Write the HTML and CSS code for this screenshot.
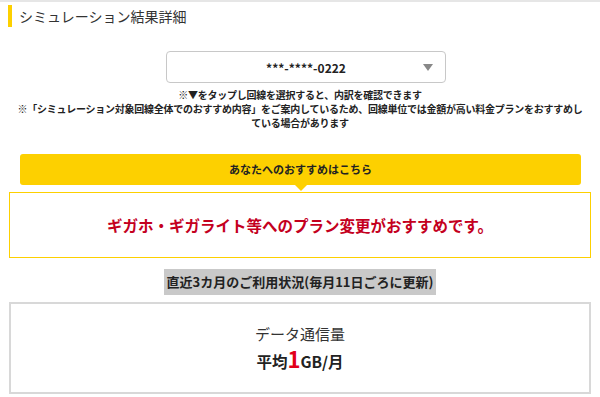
FILE: index.html
```html
<!DOCTYPE html>
<html lang="ja">
<head>
  <meta charset="UTF-8">
  <meta name="viewport" content="width=device-width, initial-scale=1.0">
  <title>シミュレーション結果詳細</title>
  <link rel="stylesheet" href="styles.css">
</head>
<body>
  <header class="page-title">
    <h1>シミュレーション結果詳細</h1>
  </header>

  <main class="content">
    <div class="line-select">
      <span></span>
      <span class="line-number">***-****-0222</span>
      <span class="arrow"></span>
    </div>

    <p class="notes">
      ※▼をタップし回線を選択すると、内訳を確認できます<br>
      ※「シミュレーション対象回線全体でのおすすめ内容」をご案内しているため、回線単位では金額が高い料金プランをおすすめし<br>
      ている場合があります
    </p>

    <section class="recommend">
      <div class="recommend-head">あなたへのおすすめはこちら</div>
      <div class="recommend-body">ギガホ・ギガライト等へのプラン変更がおすすめです。</div>
    </section>

    <div class="usage-label-wrap">
      <span class="usage-label">直近3カ月のご利用状況(毎月11日ごろに更新)</span>
    </div>

    <section class="usage-card">
      <p class="usage-title">データ通信量</p>
      <p class="usage-value">平均<span class="num">1</span>GB/月</p>
    </section>
  </main>
</body>
</html>
```

FILE: styles.css
```css
body {
  margin: 0;
  font-family: "Noto Sans CJK JP", "Noto Sans", sans-serif;
  color: #222;
  background: #fff;
}

.page-title {
  border-top: 2px solid #e6e6e6;
  padding: 3px 8px 0;
}

.page-title h1 {
  margin: 0;
  border-left: 4px solid #fdd000;
  padding-left: 7px;
  font-size: 14px;
  font-weight: normal;
  line-height: 22px;
  color: #333;
}

.content {
  padding: 0 9px;
}

.line-select {
  box-sizing: border-box;
  width: 280px;
  height: 32px;
  margin: 24px 0 0 157px;
  padding: 0 12px;
  border: 1px solid #c8c8c8;
  border-radius: 4px;
  display: grid;
  grid-template-columns: 1fr auto 1fr;
  align-items: center;
}

.line-number {
  font-size: 12px;
  font-weight: bold;
}

.arrow {
  justify-self: end;
  width: 0;
  height: 0;
  border-left: 5px solid transparent;
  border-right: 5px solid transparent;
  border-top: 7px solid #888;
}

.notes {
  margin: 5px 0 0;
  font-size: 10px;
  font-weight: bold;
  line-height: 14px;
  letter-spacing: -0.25px;
  text-align: center;
  white-space: nowrap;
}

.recommend {
  margin-top: 24px;
}

.recommend-head {
  position: relative;
  margin: 0 10px 0 11px;
  height: 31px;
  line-height: 31px;
  background: #fdd000;
  border-radius: 3px;
  text-align: center;
  font-size: 11px;
  font-weight: bold;
}

.recommend-head::after {
  content: "";
  position: absolute;
  left: 50%;
  top: 100%;
  margin-left: -6px;
  border-left: 6px solid transparent;
  border-right: 6px solid transparent;
  border-top: 6px solid #fdd000;
}

.recommend-body {
  margin-top: 7px;
  height: 66px;
  box-sizing: border-box;
  border: 1.5px solid #fdd000;
  display: flex;
  align-items: center;
  justify-content: center;
  font-size: 15.5px;
  font-weight: bold;
  color: #c4001e;
}

.usage-label-wrap {
  margin-top: 10px;
  text-align: center;
}

.usage-label {
  display: inline-block;
  padding: 0 3px;
  line-height: 26px;
  background: #c9c9c9;
  font-size: 13px;
  font-weight: bold;
}

.usage-card {
  margin-top: 7px;
  height: 92px;
  box-sizing: border-box;
  border: 2px solid #d8d8d8;
  padding-top: 20px;
  text-align: center;
}

.usage-card p {
  margin: 0;
}

.usage-title {
  font-size: 15px;
  line-height: 20px;
  color: #333;
}

.usage-value {
  font-size: 15.5px;
  font-weight: bold;
  line-height: 28px;
}

.usage-value .num {
  font-size: 22px;
  color: #e2001a;
}
```
